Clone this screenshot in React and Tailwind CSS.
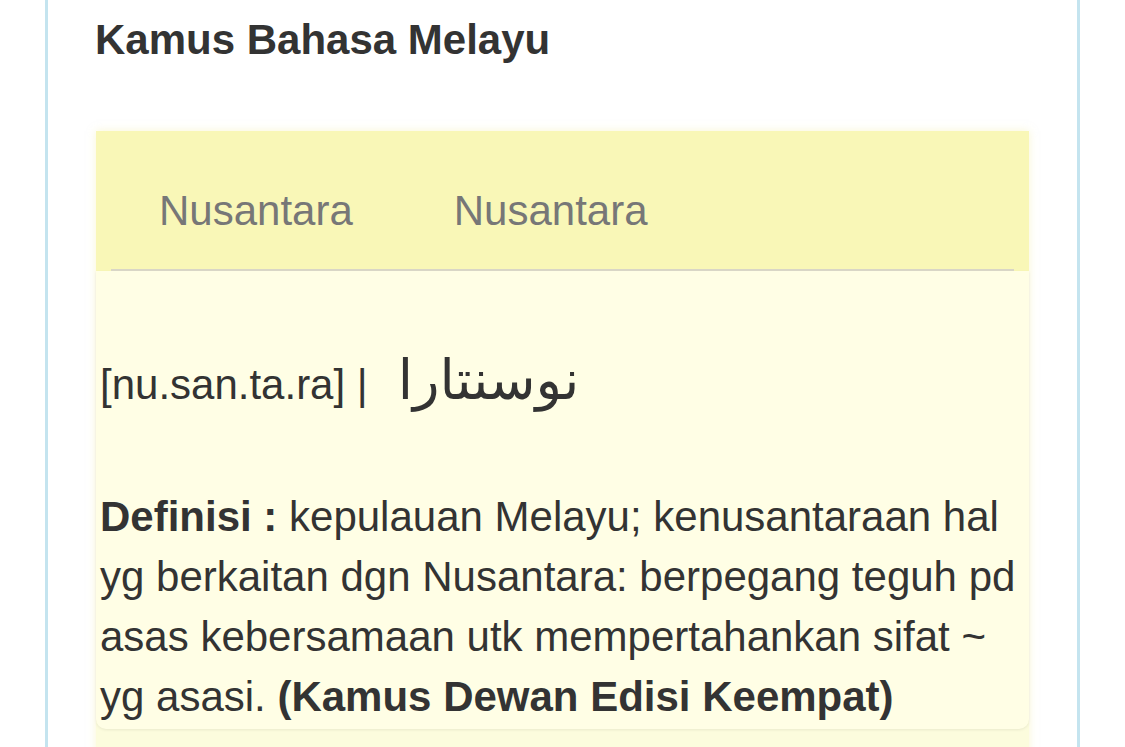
export default function App() {
  return (
    <div className="min-h-screen bg-white font-['Liberation_Sans',Arial,sans-serif] text-[#333]">
      <div className="ml-[45px] w-[1035px] min-h-[747px] border-x-[3px] border-[#c4e4ef]">
        <h1 className="pl-[47px] pt-[16px] text-[42px] font-bold leading-[48px] text-[#333]">
          Kamus Bahasa Melayu
        </h1>

        <div className="mt-[67px] ml-[48px] w-[933px] bg-[#fcfcdd] pb-[40px] shadow-[0_0_8px_rgba(245,240,170,0.5)]">
          <div className="flex h-[140px] flex-col bg-[#f9f7b7] px-[15px]">
            <div className="flex flex-1 items-center gap-[101px] pl-[48px] pt-[20px] text-[42px] text-[#777]">
              <span>Nusantara</span>
              <span>Nusantara</span>
            </div>
            <div className="h-[2px] bg-[#d9d6c6]" />
          </div>

          <div className="rounded-b-[10px] bg-[#fffee5] px-[4px] pb-[2px] shadow-[0_1px_3px_rgba(0,0,0,0.08)]">
            <div className="flex items-baseline pt-[84px]">
              <span className="text-[42px] leading-[60px]">[nu.san.ta.ra] |</span>
              <span
                dir="rtl"
                className="ml-[30px] font-['DejaVu_Sans',sans-serif] text-[55px] leading-[40px] text-[#333]"
              >
                نوسنتارا
              </span>
            </div>

            <p className="mt-[72px] text-[42px] leading-[60px]">
              <b>Definisi :</b> kepulauan Melayu; kenusantaraan hal yg berkaitan dgn Nusantara:
              berpegang teguh pd asas kebersamaan utk mempertahankan sifat ~ yg asasi.{' '}
              <b>(Kamus Dewan Edisi Keempat)</b>
            </p>
          </div>
        </div>
      </div>
    </div>
  )
}
